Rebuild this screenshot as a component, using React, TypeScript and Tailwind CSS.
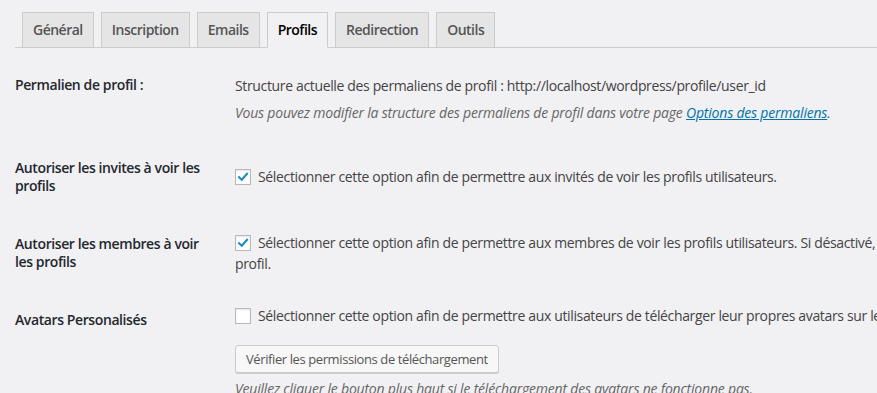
import React from "react";

const tabs = ["Général", "Inscription", "Emails", "Profils", "Redirection", "Outils"];

function Check({ checked }: { checked?: boolean }) {
  return (
    <span className="inline-flex h-4 w-4 shrink-0 items-center justify-center border border-[#b4b9be] bg-white shadow-[inset_0_1px_2px_rgba(0,0,0,0.1)]">
      {checked && (
        <svg viewBox="0 0 16 16" className="h-4 w-4">
          <path d="M3.5 8.2 L6.6 11.2 L12.6 4.4" fill="none" stroke="#1e8cbe" strokeWidth="2.4" strokeLinecap="square" />
        </svg>
      )}
    </span>
  );
}

function Row({ label, children, tdClass }: { label: React.ReactNode; children: React.ReactNode; tdClass?: string }) {
  return (
    <div className="flex">
      <div className="w-[210px] shrink-0 pr-[10px] pt-[20px] pb-[20px] text-[14px] font-semibold leading-[18px] tracking-[-0.4px] text-[#23282d]">
        {label}
      </div>
      <div className={"flex-1 px-[10px] text-[14px] tracking-[-0.35px] text-[#444] " + (tdClass ?? "")}>{children}</div>
    </div>
  );
}

export default function App() {
  return (
    <div className="h-[393px] w-[877px] overflow-hidden bg-[#f1f0f3] font-['Open_Sans',sans-serif]">
      <div className="w-[1200px] pl-[15px]">
        <div className="flex border-b border-[#ccc] pt-[12px]">
          {tabs.map((t) => {
            const active = t === "Profils";
            return (
              <div
                key={t}
                className={
                  "ml-[7px] -mb-px border px-[10px] py-[5px] text-[14px] font-semibold leading-[24px] tracking-[-0.5px] " +
                  (active
                    ? "border-[#ccc] border-b-[#f1f0f3] bg-[#f1f0f3] text-black"
                    : "border-[#ccc] bg-[#e5e5e5] text-[#555]")
                }
              >
                {t}
              </div>
            );
          })}
        </div>

        <div className="mt-[8px] flex flex-col">
          <Row label="Permalien de profil :" tdClass="pt-[20px] pb-[16px] leading-[20px]">
            <div>Structure actuelle des permaliens de profil : http://localhost/wordpress/profile/user_id</div>
            <div className="mt-[7px] italic tracking-[-0.2px] text-[#666]">
              Vous pouvez modifier la structure des permaliens de profil dans votre page{" "}
              <span className="text-[#0073aa] underline">Options des permaliens</span>.
            </div>
          </Row>

          <Row label={<>Autoriser les invites à voir les<br />profils</>} tdClass="self-center leading-[20px]">
            <div className="flex items-center gap-[7px]">
              <Check checked />
              <span>Sélectionner cette option afin de permettre aux invités de voir les profils utilisateurs.</span>
            </div>
          </Row>

          <Row label={<>Autoriser les membres à voir<br />les profils</>} tdClass="self-center leading-[21px]">
            <div className="flex items-center gap-[7px] whitespace-nowrap">
              <Check checked />
              <span>
                Sélectionner cette option afin de permettre aux membres de voir les profils utilisateurs. Si désactivé,&nbsp;&nbsp;&nbsp;ils ne pourront voir que leur propre
              </span>
            </div>
            <div>profil.</div>
          </Row>

          <Row label="Avatars Personalisés" tdClass="pt-[15px] leading-[20px]">
            <div className="flex items-center gap-[7px] whitespace-nowrap">
              <Check />
              <span>Sélectionner cette option afin de permettre aux utilisateurs de télécharger leur propres avatars sur le site.</span>
            </div>
            <div className="mt-[19px]">
              <span className="inline-block h-[28px] rounded-[3px] border border-[#ccc] bg-[#f7f7f7] px-[10px] text-[13px] leading-[26px] tracking-[-0.4px] text-[#555] shadow-[0_1px_0_#ccc]">
                Vérifier les permissions de téléchargement
              </span>
            </div>
            <div className="mt-[6px] italic tracking-[-0.2px] text-[#666]">
              Veuillez cliquer le bouton plus haut si le téléchargement des avatars ne fonctionne pas.
            </div>
          </Row>
        </div>
      </div>
    </div>
  );
}
